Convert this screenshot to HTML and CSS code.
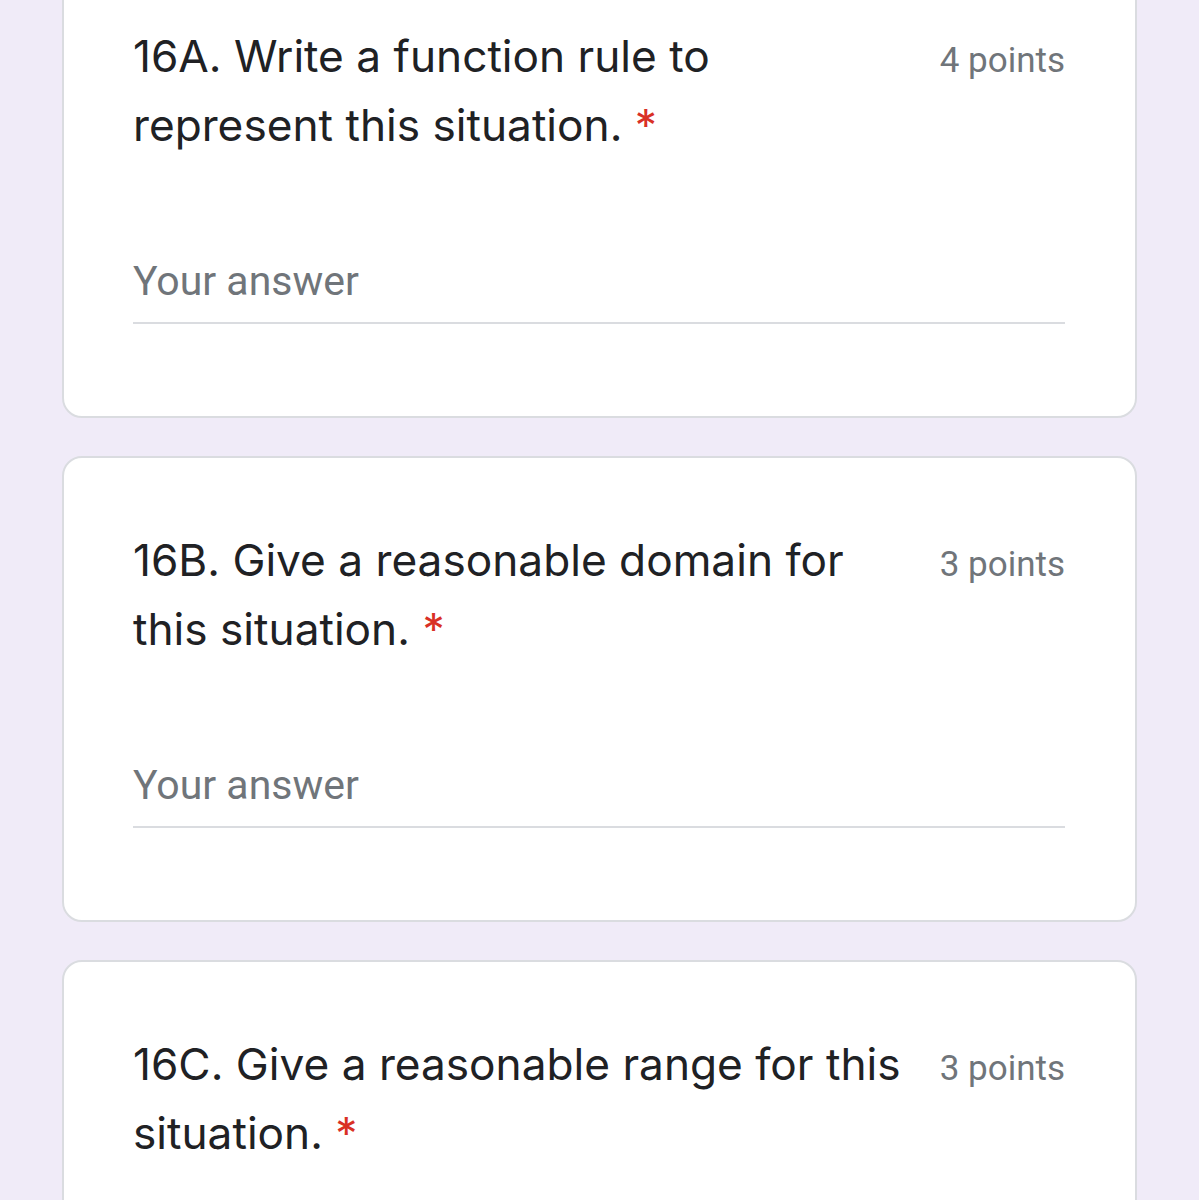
FILE: index.html
```html
<!DOCTYPE html>
<html>
<head>
<meta charset="utf-8">
<link rel="stylesheet" href="styles.css">
</head>
<body>
<div class="list">
  <div class="card">
    <div class="head">
      <div class="title">16A. Write a function rule to represent this situation. <span class="req">*</span></div>
      <div class="points">4 points</div>
    </div>
    <div class="answer">Your answer</div>
  </div>
  <div class="card">
    <div class="head">
      <div class="title">16B. Give a reasonable domain for this situation. <span class="req">*</span></div>
      <div class="points">3 points</div>
    </div>
    <div class="answer">Your answer</div>
  </div>
  <div class="card">
    <div class="head">
      <div class="title">16C. Give a reasonable range for this situation. <span class="req">*</span></div>
      <div class="points">3 points</div>
    </div>
    <div class="answer">Your answer</div>
  </div>
</div>
</body>
</html>
```
FILE: styles.css
```css
html, body {
  margin: 0;
  padding: 0;
  background: #f0ebf8;
  overflow: hidden;
}
.list {
  display: flex;
  flex-direction: column;
  gap: 38px;
  padding: 0 62px;
  margin-top: -48px;
}
.card {
  background: #fff;
  border: 2px solid #dadce0;
  border-radius: 20px;
  height: 466px;
  box-sizing: border-box;
  padding: 68px 70px 0 69px;
}
.head {
  display: flex;
  align-items: baseline;
}
.title {
  flex: 1;
  font-family: Inter, sans-serif;
  font-size: 44.2px;
  line-height: 69px;
  color: #202124;
  padding-right: 28px;
}
.req {
  color: #d93025;
}
.points {
  flex-shrink: 0;
  font-family: Roboto, sans-serif;
  font-size: 35px;
  line-height: 69px;
  color: #70757a;
}
.answer {
  margin-top: 96px;
  font-family: Roboto, sans-serif;
  font-size: 41px;
  line-height: 50px;
  color: #70757a;
  border-bottom: 2px solid #dadce0;
  padding-bottom: 16px;
}
```
